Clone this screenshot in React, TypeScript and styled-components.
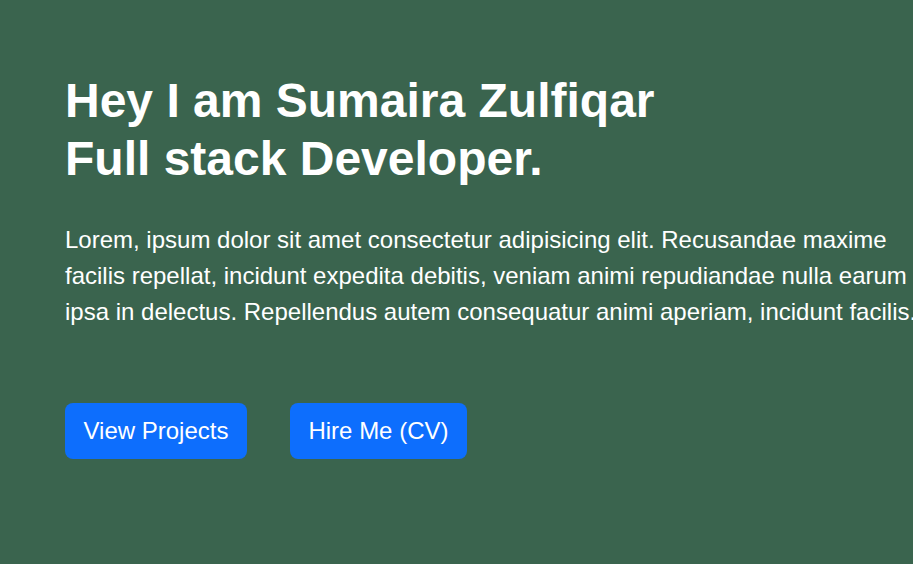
import React from "react";
import styled, { createGlobalStyle } from "styled-components";

const GlobalStyle = createGlobalStyle`
  html, body {
    margin: 0;
    padding: 0;
    background: #3a644e;
    overflow: hidden;
  }
  body {
    font-family: "Liberation Sans", Arial, sans-serif;
    color: #ffffff;
  }
`;

const App = () => {
  return (
    <>
      <GlobalStyle />
      <S.Hero>
        <S.Title>
          Hey I am Sumaira Zulfiqar
          <br />
          Full stack Developer.
        </S.Title>
        <S.Intro>
          Lorem, ipsum dolor sit amet consectetur adipisicing elit. Recusandae
          maxime facilis repellat, incidunt expedita debitis, veniam animi
          repudiandae nulla earum ipsa in delectus. Repellendus autem
          consequatur animi aperiam, incidunt facilis.
        </S.Intro>
        <S.Actions>
          <S.Button>View Projects</S.Button>
          <S.Button>Hire Me (CV)</S.Button>
        </S.Actions>
      </S.Hero>
    </>
  );
};

const S = {
  Hero: styled.section`
    min-height: 564px;
    box-sizing: border-box;
    padding: 72px 0 0 65px;
    display: flex;
    flex-direction: column;
    align-items: flex-start;
  `,
  Title: styled.h1`
    margin: 0;
    font-size: 48px;
    font-weight: 700;
    line-height: 1.2;
  `,
  Intro: styled.p`
    margin: 35px 0 0;
    width: 880px;
    font-size: 24px;
    line-height: 1.5;
  `,
  Actions: styled.div`
    margin-top: 73px;
    display: flex;
    gap: 43px;
  `,
  Button: styled.button`
    font-family: inherit;
    font-size: 24px;
    line-height: 1.5;
    color: #ffffff;
    background: #0d6efd;
    border: none;
    border-radius: 8px;
    padding: 10px 18.5px;
    cursor: pointer;
  `,
};

export default App;
